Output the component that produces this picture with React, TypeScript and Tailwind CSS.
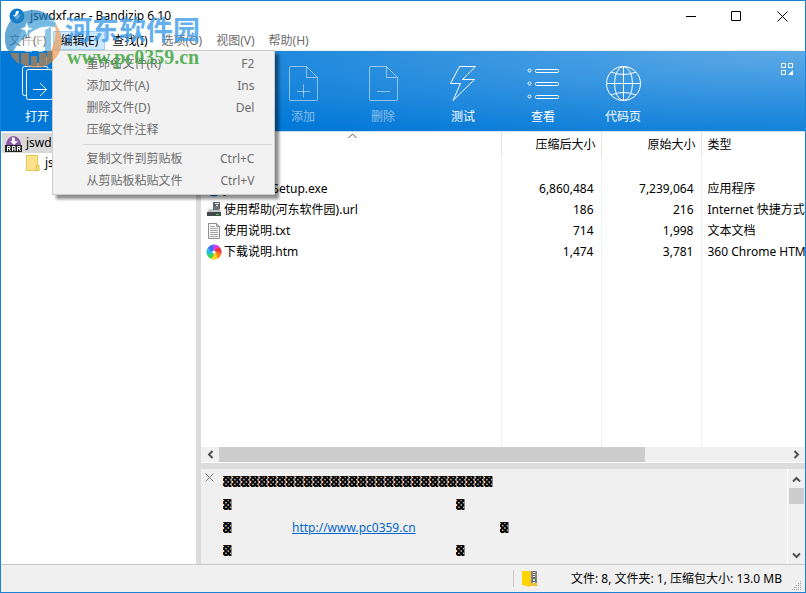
import type { ReactNode } from "react";

const menus = [
  { label: "文件(F)", active: false },
  { label: "编辑(E)", active: true },
  { label: "查找(I)", active: true },
  { label: "选项(O)", active: false },
  { label: "视图(V)", active: false },
  { label: "帮助(H)", active: false },
];

const editMenu = [
  [
    { label: "重命名文件(R)", keys: "F2" },
    { label: "添加文件(A)", keys: "Ins" },
    { label: "删除文件(D)", keys: "Del" },
    { label: "压缩文件注释", keys: "" },
  ],
  [
    { label: "复制文件到剪贴板", keys: "Ctrl+C" },
    { label: "从剪贴板粘贴文件", keys: "Ctrl+V" },
  ],
];

function AppIcon() {
  return (
    <svg width="16" height="16" viewBox="0 0 16 16">
      <circle cx="8" cy="8" r="7.500" fill="#0b78d0" />
      <path d="M7 3h3l-1 4h3l-4 5-4-5h2z" fill="#fff" />
    </svg>
  );
}

function RarIcon() {
  return (
    <svg width="17" height="17" viewBox="0 0 17 17">
      <path d="M1 10a7.500 9 0 0 1 15 0z" fill="#8b57a8" />
      <path d="M7 2l3 1v3h3L9 10 5 6h2z" fill="#fff" />
      <rect y="10" width="17" height="7" fill="#222" />
      <path
        d="M2.500 16v-4.500h2.500v2H2.500M4 13.500l1.500 2.500M7.500 16v-4.500H10v4.500M7.500 14H10M12.500 16v-4.500H15v2h-2.500M14 13.500l1.500 2.500"
        fill="none"
        stroke="#fff"
      />
    </svg>
  );
}

function FolderIcon() {
  return (
    <svg width="14" height="16" viewBox="0 0 14 16">
      <rect x="0.500" y="0.500" width="11" height="15" fill="#ffe38c" stroke="#eac658" />
      <path d="M10.500 10.500h2.500v5h-3z" fill="#ffe38c" stroke="#e3b93c" />
    </svg>
  );
}

function UrlIcon() {
  return (
    <svg width="16" height="16" viewBox="0 0 16 16">
      <path d="M7 0h7v8H7z" fill="#5c6166" />
      <path d="M9 1h4v1H9zM10 3h2v2h-2z" fill="#f2f2f2" />
      <path d="M3 7h11l1 4H1z" fill="#c4c7c9" />
      <path d="M7 4h6v4H7z" fill="#6d7276" />
      <path d="M1 10h14v4H1z" fill="#45484b" />
      <path d="M10 12h3v1h-3z" fill="#35e04a" />
    </svg>
  );
}

function TextIcon() {
  return (
    <svg width="16" height="16" viewBox="0 0 16 16">
      <path d="M2.500 0.500h8l3 3v12h-11z" fill="#fafafa" stroke="#8d8d8d" />
      <path d="M10.500 0.500v3h3" fill="none" stroke="#8d8d8d" />
      <path d="M4 3.500h5M4 5.500h8M4 7.500h8M4 9.500h8M4 11.500h8M4 13.500h8" stroke="#a5a5a5" />
    </svg>
  );
}

function HtmIcon() {
  const colors = ["#d13bf0", "#ef3340", "#ff7a1a", "#ffd21f", "#3fd255", "#28b8ec", "#3e6df5"];
  return (
    <svg width="16" height="16" viewBox="0 0 16 16">
      {colors.map((color, i) => (
        <path
          key={color}
          d="M8 8Q5.500 4 8 0.500Q12 0.500 14 3.500Q10 4 8 8z"
          fill={color}
          transform={`rotate(${(i * 360) / 7} 8 8)`}
        />
      ))}
      <circle cx="8" cy="8" r="1.500" fill="#fff" />
    </svg>
  );
}

function ZipFolderIcon() {
  return (
    <svg width="17" height="17" viewBox="0 0 17 17">
      <path d="M5 1h10v14h1v1H5z" fill="#f3c33c" />
      <path d="M0 1h5l3 2v14l-8-2z" fill="#ffd400" />
      <path d="M9 1h6v12H9z" fill="#858585" />
      <path d="M11 1h2v12h-2z" fill="#fff" />
      <path d="M12 1v12" stroke="#555" strokeWidth="2" strokeDasharray="1 1" />
      <path d="M10.500 8.500h3v3h-3z" fill="#e6e6e6" stroke="#6a6a6a" />
    </svg>
  );
}

function ToolIcon({ children }: { children: ReactNode }) {
  return (
    <svg width="38" height="38" viewBox="0 0 38 38" fill="none" stroke="currentColor">
      {children}
    </svg>
  );
}

const tools = [
  {
    label: "添加",
    disabled: true,
    icon: (
      <ToolIcon>
        <path d="M6.500 1.500h16l11 11v22q0 1-1 1h-26q-1 0-1-1v-32q0-1 1-1z" />
        <path d="M22.500 1.500v11h11M19.500 19.500v13M13 26.500h13" />
      </ToolIcon>
    ),
  },
  {
    label: "删除",
    disabled: true,
    icon: (
      <ToolIcon>
        <path d="M6.500 1.500h16l11 11v22q0 1-1 1h-26q-1 0-1-1v-32q0-1 1-1z" />
        <path d="M22.500 1.500v11h11M13 26.500h13" />
      </ToolIcon>
    ),
  },
  {
    label: "测试",
    disabled: false,
    icon: (
      <ToolIcon>
        <path d="M15.500 1.500h16l-13 13h12L9 35.500l7.500-17H6.500z" />
      </ToolIcon>
    ),
  },
  {
    label: "查看",
    disabled: false,
    icon: (
      <ToolIcon>
        <circle cx="5.500" cy="5.500" r="1.500" />
        <circle cx="5.500" cy="18.500" r="1.500" />
        <circle cx="5.500" cy="31.500" r="1.500" />
        <rect x="11.500" y="4.500" width="23" height="3" rx="1" />
        <rect x="11.500" y="17.500" width="23" height="3" rx="1" />
        <rect x="11.500" y="30.500" width="23" height="3" rx="1" />
      </ToolIcon>
    ),
  },
  {
    label: "代码页",
    disabled: false,
    icon: (
      <ToolIcon>
        <circle cx="19.500" cy="18.500" r="17" />
        <ellipse cx="19.500" cy="18.500" rx="9" ry="17" />
        <path d="M19.500 1.500v34M2.500 18.500h34M7 7q12.500 5 25 0M7 30q12.500-5 25 0" />
      </ToolIcon>
    ),
  },
];

const files = [
  { name: "jswdxf1_Setup.exe", icon: <AppIcon />, packed: "6,860,484", size: "7,239,064", type: "应用程序" },
  { name: "使用帮助(河东软件园).url", icon: <UrlIcon />, packed: "186", size: "216", type: "Internet 快捷方式" },
  { name: "使用说明.txt", icon: <TextIcon />, packed: "714", size: "1,998", type: "文本文档" },
  { name: "下载说明.htm", icon: <HtmIcon />, packed: "1,474", size: "3,781", type: "360 Chrome HTML Document" },
];

function Chevron({ className }: { className: string }) {
  return (
    <svg width="9" height="9" viewBox="0 0 9 9" className={className}>
      <path d="M1 6.500l3.500-3.500 3.500 3.500" fill="none" stroke="#505050" strokeWidth="2" />
    </svg>
  );
}

function Shade() {
  return (
    <span className="flex h-[11px] w-[9px] shrink-0 items-center overflow-hidden border-r border-[#8a8a8a] font-['DejaVu_Sans_Mono',monospace] text-[15px] text-black">
      ▓
    </span>
  );
}

function TitleBar() {
  return (
    <div className="flex h-[30px] shrink-0 items-center pl-2">
      <AppIcon />
      <h1 className="ml-[5px] flex-1 text-xs">jswdxf.rar - Bandizip 6.10</h1>
      <button aria-label="最小化" className="flex h-full w-[46px] items-center justify-center">
        <svg width="11" height="11" stroke="#000">
          <path d="M1 5.500h10" />
        </svg>
      </button>
      <button aria-label="最大化" className="flex h-full w-[46px] items-center justify-center">
        <svg width="11" height="11" stroke="#000" fill="none">
          <path d="M0.500 0.500h9v9h-9z" />
        </svg>
      </button>
      <button aria-label="关闭" className="flex h-full w-[46px] items-center justify-center">
        <svg width="11" height="11" stroke="#000">
          <path d="M0.500 0.500l10 10M10.500 0.500l-10 10" />
        </svg>
      </button>
    </div>
  );
}

function EditDropdown() {
  return (
    <div className="absolute top-full -left-px z-10 w-[223px] border border-[#ccc] bg-[#f2f2f2] py-[2px] text-[#6d6d6d] shadow-[4px_4px_3px_rgba(0,0,0,0.45)]">
      {editMenu.map((group, i) => (
        <div key={i}>
          {i > 0 && <hr className="my-[3px] mr-[2px] ml-[30px] border-[#d7d7d7]" />}
          {group.map((item) => (
            <button key={item.label} disabled className="flex h-[22px] w-full items-center justify-between pr-5 pl-[33px]">
              <span>{item.label}</span>
              <span>{item.keys}</span>
            </button>
          ))}
        </div>
      ))}
    </div>
  );
}

function MenuBar() {
  return (
    <nav className="flex h-5 shrink-0 border-b border-[#f0f0f0] pl-px">
      {menus.map((menu) => {
        const open = menu.label === "编辑(E)";
        return (
          <div key={menu.label} className="relative">
            <button
              className={
                "h-full border px-[6px] whitespace-nowrap " +
                (open ? "border-[#99d1ff] bg-[#cce8ff] " : "border-transparent ") +
                (menu.active ? "text-black" : "text-[#6d6d6d]")
              }
            >
              {menu.label}
            </button>
            {open && <EditDropdown />}
          </div>
        );
      })}
    </nav>
  );
}

function Toolbar() {
  return (
    <div className="flex h-20 shrink-0 bg-[#0078d7] bg-[radial-gradient(800px_100px_at_100%_0,#5eaae7,#0078d7)] text-white">
      <button className="flex w-[72px] flex-col items-center pt-[14px]">
        <ToolIcon>
          <path d="M30 4.500V3.500q0-2-2-2H6.500q-2 0-2 2v25q0 2 2 2h2" />
          <rect x="8.500" y="4.500" width="26" height="30" rx="2" />
          <path d="M15 24.500h13M22 18l6.500 6.500-6.500 6.500" />
        </ToolIcon>
        <span className="mt-[6px]">打开</span>
      </button>
      <div className="ml-[190px] flex flex-1">
        {tools.map((tool) => (
          <button
            key={tool.label}
            disabled={tool.disabled}
            className={"flex w-20 flex-col items-center pt-[14px] " + (tool.disabled ? "text-white/50" : "")}
          >
            {tool.icon}
            <span className="mt-[6px]">{tool.label}</span>
          </button>
        ))}
      </div>
      <button aria-label="布局" className="mt-3 mr-3 h-3 w-3">
        <svg width="12" height="12" fill="none" stroke="#fff">
          <path d="M0.500 0.500h4v4h-4zM7.500 0.500h4v4h-4zM0.500 7.500h4v4h-4z" />
          <path d="M12 7v5H7z" fill="#fff" stroke="none" />
        </svg>
      </button>
    </div>
  );
}

function Tree() {
  return (
    <aside className="w-[195px] shrink-0 overflow-hidden pl-px">
      <div className="mt-px flex h-5 items-center bg-[#d9d9d9] pl-[3px]">
        <RarIcon />
        <span className="ml-1">jswdxf.rar</span>
      </div>
      <div className="flex h-5 items-center pl-6">
        <FolderIcon />
        <span className="ml-[5px]">jswdxf</span>
      </div>
    </aside>
  );
}

function FileTable() {
  return (
    <div className="min-h-0 flex-1 overflow-hidden">
      <table className="h-full w-full table-fixed whitespace-nowrap">
        <colgroup>
          <col className="w-[300px]" />
          <col className="w-[100px]" />
          <col className="w-[100px]" />
          <col />
        </colgroup>
        <thead>
          <tr className="h-[25px] *:font-normal">
            <th aria-label="名称" className="border-r border-[#e5e5e5] pl-1 align-top">
              <svg width="9" height="6" className="mx-auto mt-px" fill="none" stroke="#555">
                <path d="M0.500 5l4-4 4 4" />
              </svg>
            </th>
            <th className="border-r border-[#e5e5e5] pr-[5px] text-right">压缩后大小</th>
            <th className="border-r border-[#e5e5e5] pr-[5px] text-right">原始大小</th>
            <th className="pl-[6px] text-left">类型</th>
          </tr>
        </thead>
        <tbody className="[&_td]:border-r [&_td]:border-[#ebf4fe] [&_td:last-child]:border-r-0">
          <tr className="h-[21px]">
            <td />
            <td />
            <td />
            <td />
          </tr>
          {files.map((file) => (
            <tr key={file.name} className="h-[21px]">
              <td className="pl-[5px]">
                <span className="flex items-center gap-[2px]">
                  {file.icon}
                  {file.name}
                </span>
              </td>
              <td className="pr-[7px] text-right">{file.packed}</td>
              <td className="pr-[7px] text-right">{file.size}</td>
              <td className="overflow-hidden pl-[6px]">{file.type}</td>
            </tr>
          ))}
          <tr>
            <td />
            <td />
            <td />
            <td />
          </tr>
        </tbody>
      </table>
    </div>
  );
}

function HorizontalScroll() {
  return (
    <div className="mb-px flex h-[15px] shrink-0 items-center bg-[#f0f0f0]">
      <span className="flex w-[18px] justify-center">
        <Chevron className="-rotate-90" />
      </span>
      <span className="flex h-full flex-1">
        <span className="h-full w-3/4 bg-[#cdcdcd]" />
      </span>
      <span className="flex w-[18px] justify-center">
        <Chevron className="rotate-90" />
      </span>
    </div>
  );
}

function Comment() {
  return (
    <div className="flex h-[95px] shrink-0 bg-[#f0f0f0]">
      <button aria-label="关闭注释" className="mt-1 ml-1 h-[9px] w-[9px]">
        <svg width="9" height="9" stroke="#777">
          <path d="M0.500 0.500l8 8M8.500 0.500l-8 8" />
        </svg>
      </button>
      <div className="ml-[9px] flex-1 overflow-hidden pt-px *:flex *:h-[23px] *:items-center">
        <div>
          {Array.from({ length: 30 }, (_, i) => (
            <Shade key={i} />
          ))}
        </div>
        <div>
          <Shade />
          <span className="w-[224px]" />
          <Shade />
        </div>
        <div>
          <Shade />
          <a href="http://www.pc0359.cn" className="mr-[84px] ml-[60px] text-[#0066cc] underline">
            http://www.pc0359.cn
          </a>
          <Shade />
        </div>
        <div>
          <Shade />
          <span className="w-[224px]" />
          <Shade />
        </div>
      </div>
      <div className="flex w-[18px] flex-col items-center border-l border-white py-1">
        <Chevron className="mt-[2px]" />
        <span className="mt-1 h-4 w-[15px] bg-[#cdcdcd]" />
        <Chevron className="mt-auto rotate-180" />
      </div>
    </div>
  );
}

function StatusBar() {
  return (
    <footer className="flex h-7 shrink-0 items-center justify-end border-t border-[#c8c8c8] bg-[#f0f0f0]">
      <span className="mr-2 h-[17px] w-px bg-[#c8c8c8]" />
      <ZipFolderIcon />
      <span className="ml-8">文件: 8, 文件夹: 1, 压缩包大小: 13.0 MB</span>
      <svg width="11" height="11" className="mr-[2px] ml-[10px] self-end" fill="#a0a0a0">
        <path d="M8 0h1v1H8zM6 2h1v1H6zM8 2h1v1H8zM4 4h1v1H4zM6 4h1v1H6zM8 4h1v1H8zM2 6h1v1H2zM4 6h1v1H4zM6 6h1v1H6zM8 6h1v1H8zM0 8h1v1H0zM2 8h1v1H2zM4 8h1v1H4zM6 8h1v1H6zM8 8h1v1H8z" />
      </svg>
    </footer>
  );
}

function WatermarkLogo() {
  return (
    <svg width="58" height="60" viewBox="0 0 58 60" className="opacity-70">
      <path d="M2 39A28 28 0 0 1 50 11Q38 8 27 15Q11 25 8 43Q4 42 2 39z" fill="#2384c5" />
      <path d="M8 42Q10 25 25 14Q38 6 50 12L53 18Q40 14 28 21Q15 29 8 42z" fill="#3c9fd8" />
      <path d="M22 12l1 5 5 2-5 1-1 5-2-5-5-1 5-2z" fill="#fff" />
      <path d="M50 13Q62 29 53 45Q42 62 21 56Q40 54 47 38Q52 27 50 13z" fill="#ee9d55" />
      <path d="M5 43h9v11Q8 50 5 43zM16 43h8v14l-8-3zM26 46h6v12l-6-1zM34 43h7v13l-7 2zM42 41h6v10l-6 4z" fill="#c38040" />
      <path d="M20 42V30l7-4v12h6V24l5-3v21h-5v-1h-6v1z" fill="#fff" fillOpacity="0.85" />
      <path d="M40 20l6-3v24h-6z" fill="#5aaee0" />
    </svg>
  );
}

function Watermark() {
  return (
    <div className="pointer-events-none absolute top-[9px] left-1 z-20 flex gap-[2px]">
      <WatermarkLogo />
      <div className="mt-[3px] whitespace-nowrap">
        <p className="text-[27px] leading-[34px] font-bold text-[#3b9be8]/80">河东软件园</p>
        <p className="pl-[2px] font-['Liberation_Serif',serif] text-[20px] leading-5 font-bold text-[#3da63d]/85">
          www.pc0359.cn
        </p>
      </div>
    </div>
  );
}

export default function App() {
  return (
    <div className="relative flex h-screen flex-col overflow-hidden border border-[#1883d7] bg-white font-['Noto_Sans','Noto_Sans_CJK_SC',sans-serif] text-xs text-black">
      <TitleBar />
      <MenuBar />
      <Toolbar />
      <main className="flex min-h-0 flex-1 border-t border-[#c8dff2]">
        <Tree />
        <div className="w-[5px] shrink-0 bg-[#dcdcdc]" />
        <section className="flex min-w-0 flex-1 flex-col">
          <FileTable />
          <HorizontalScroll />
          <div className="h-[6px] shrink-0 bg-[#dcdcdc]" />
          <Comment />
        </section>
      </main>
      <StatusBar />
      <Watermark />
    </div>
  );
}
